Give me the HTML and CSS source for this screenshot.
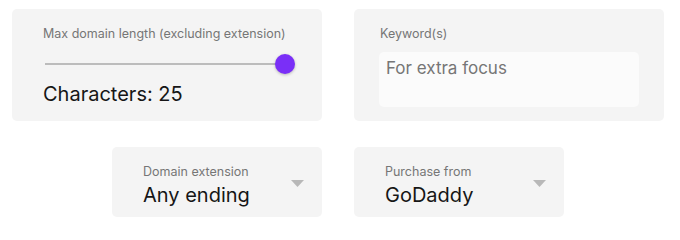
FILE: index.html
```html
<!DOCTYPE html>
<html>
<head>
<meta charset="utf-8">
<link rel="stylesheet" href="styles.css">
</head>
<body>
<div class="page">
  <div class="row">
    <div class="card card-slider">
      <div class="label">Max domain length (excluding extension)</div>
      <div class="slider">
        <div class="track"></div>
        <div class="thumb"></div>
      </div>
      <div class="value">Characters: 25</div>
    </div>
    <div class="card card-keyword">
      <div class="label">Keyword(s)</div>
      <div class="input"><span class="placeholder">For extra focus</span></div>
    </div>
  </div>
  <div class="row row-bottom">
    <div class="card select select-left">
      <div class="select-text">
        <div class="label">Domain extension</div>
        <div class="value">Any ending</div>
      </div>
      <svg class="caret" width="13" height="7" viewBox="0 0 13 7"><path d="M0 0h13L6.5 7z" fill="#b8b8b8"/></svg>
    </div>
    <div class="card select select-right">
      <div class="select-text">
        <div class="label">Purchase from</div>
        <div class="value">GoDaddy</div>
      </div>
      <svg class="caret" width="13" height="7" viewBox="0 0 13 7"><path d="M0 0h13L6.5 7z" fill="#b8b8b8"/></svg>
    </div>
  </div>
</div>
</body>
</html>
```

FILE: styles.css
```css
* { box-sizing: border-box; }
html, body { margin: 0; padding: 0; background: #ffffff; }
body { font-family: Inter, "Noto Sans", sans-serif; }

.page {
  padding: 9px 0 0 12px;
}

.row {
  display: grid;
  grid-template-columns: 310px 310px;
  column-gap: 32px;
}

.row-bottom {
  margin-top: 26px;
}

.card {
  background: #f4f4f4;
  border-radius: 5px;
}

.label {
  font-size: 12.5px;
  line-height: 15px;
  color: #767676;
  white-space: nowrap;
}

.value {
  font-size: 20px;
  line-height: 24px;
  color: #161616;
  white-space: nowrap;
}

.card-slider {
  height: 112px;
  padding: 17px 27px 0 31px;
}

.slider {
  position: relative;
  height: 20px;
  margin-top: 13px;
  display: flex;
  align-items: center;
}

.track {
  flex: 1;
  height: 2px;
  margin-left: 2px;
  margin-right: 10px;
  background: #bcbcbc;
}

.thumb {
  position: absolute;
  right: 0;
  top: 0;
  width: 20px;
  height: 20px;
  border-radius: 50%;
  background: #7a2ff7;
  box-shadow: 0 1px 3px rgba(0, 0, 0, 0.25);
}

.card-slider .value {
  margin-top: 8px;
}

.card-keyword {
  height: 112px;
  padding: 17px 25px 0 26px;
}

.input {
  margin-top: 11px;
  margin-left: -1px;
  height: 55px;
  background: #fbfbfb;
  border-radius: 5px;
  padding: 6px 7px 0 7px;
}

.placeholder {
  font-size: 17px;
  line-height: 20px;
  color: #767676;
}

.select {
  width: 210px;
  height: 70px;
  display: flex;
  align-items: flex-start;
  padding: 17px 18px 0 31px;
}

.select-left { justify-self: end; }
.select-right { justify-self: start; }

.select-text {
  flex: 1;
}

.select .value {
  margin-top: 4px;
}

.caret {
  margin-top: 16px;
  flex: none;
}
```
